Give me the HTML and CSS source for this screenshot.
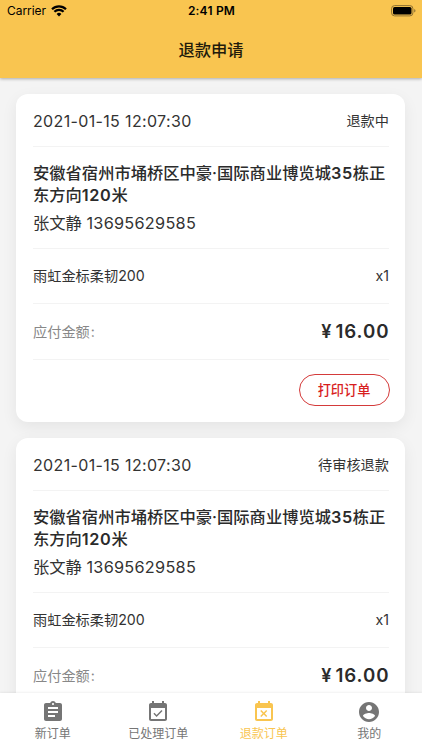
FILE: index.html
```html
<!DOCTYPE html>
<html lang="zh-CN">
<head>
<meta charset="utf-8">
<title>退款申请</title>
<link rel="stylesheet" href="styles.css">
</head>
<body>
<div class="app">
  <header class="header">
    <div class="status">
      <div class="status-left"><span class="carrier">Carrier</span>
        <svg class="wifi" viewBox="0 0 16 12"><path d="M1 4.2a10 10 0 0 1 14 0M3.4 6.8a6.5 6.5 0 0 1 9.2 0" fill="none" stroke="#000" stroke-width="2.2"/><path d="M8 11.5 5.6 9a3.4 3.4 0 0 1 4.8 0z"/></svg>
      </div>
      <span class="time">2:41 PM</span>
      <div class="status-right">
        <svg class="battery" viewBox="0 0 25 12"><rect x=".6" y=".6" width="21.3" height="10.3" rx="3" fill="none" stroke="#8f7132" stroke-width="1"/><rect x="2" y="2" width="18.5" height="7.5" rx="1.6"/><path d="M23.2 4v3.6q1.3-.6 1.3-1.8T23.2 4z" fill="#8f7132"/></svg>
      </div>
    </div>
    <h1 class="title">退款申请</h1>
  </header>
  <main class="list">
    <article class="card">
      <div class="row head"><time class="date">2021-01-15 12:07:30</time><span class="state">退款中</span></div>
      <div class="customer">
        <p class="address">安徽省宿州市埇桥区中豪·国际商业博览城<b class="num">35</b>栋正<br>东方向<b class="num">120</b>米</p>
        <p class="contact">张文静 <span class="phone">13695629585</span></p>
      </div>
      <div class="row item"><span>雨虹金标柔韧200</span><span>x1</span></div>
      <div class="row total"><span class="label">应付金额<span class="colon">:</span></span><span class="price"><span class="yen">¥</span>16.00</span></div>
      <div class="actions"><button class="print">打印订单</button></div>
    </article>
    <article class="card">
      <div class="row head"><time class="date">2021-01-15 12:07:30</time><span class="state">待审核退款</span></div>
      <div class="customer">
        <p class="address">安徽省宿州市埇桥区中豪·国际商业博览城<b class="num">35</b>栋正<br>东方向<b class="num">120</b>米</p>
        <p class="contact">张文静 <span class="phone">13695629585</span></p>
      </div>
      <div class="row item"><span>雨虹金标柔韧200</span><span>x1</span></div>
      <div class="row total"><span class="label">应付金额<span class="colon">:</span></span><span class="price"><span class="yen">¥</span>16.00</span></div>
    </article>
  </main>
  <nav class="tabs">
    <a class="tab"><svg viewBox="0 0 24 24"><path d="M19 3h-4.18C14.4 1.84 13.3 1 12 1c-1.3 0-2.4.84-2.82 2H5c-1.1 0-2 .9-2 2v14c0 1.1.9 2 2 2h14c1.1 0 2-.9 2-2V5c0-1.1-.9-2-2-2zm-7 0c.55 0 1 .45 1 1s-.45 1-1 1-1-.45-1-1 .45-1 1-1zm2 14H7v-2h7v2zm3-4H7v-2h10v2zm0-4H7V7h10v2z"/></svg><span>新订单</span></a>
    <a class="tab"><svg viewBox="0 0 24 24"><path d="M16.53 11.06 15.47 10l-4.88 4.88-2.12-2.12-1.06 1.06L10.59 17l5.94-5.94zM19 3h-1V1h-2v2H8V1H6v2H5c-1.11 0-1.99.9-1.99 2L3 19c0 1.1.89 2 2 2h14c1.1 0 2-.9 2-2V5c0-1.1-.9-2-2-2zm0 16H5V8h14v11z"/></svg><span>已处理订单</span></a>
    <a class="tab active"><svg viewBox="0 0 24 24"><path d="M9.31 17l2.44-2.44L14.19 17l1.06-1.06-2.44-2.44 2.44-2.44L14.19 10l-2.44 2.44L9.31 10l-1.06 1.06 2.44 2.44-2.44 2.44L9.31 17zM19 3h-1V1h-2v2H8V1H6v2H5c-1.11 0-1.99.9-1.99 2L3 19c0 1.1.89 2 2 2h14c1.1 0 2-.9 2-2V5c0-1.1-.9-2-2-2zm0 16H5V8h14v11z"/></svg><span>退款订单</span></a>
    <a class="tab"><svg viewBox="0 0 24 24"><path d="M12 2C6.48 2 2 6.48 2 12s4.48 10 10 10 10-4.480 10-10S17.520 2 12 2zm0 3c1.660 0 3 1.340 3 3s-1.340 3-3 3-3-1.340-3-3 1.340-3 3-3zm0 14.200c-2.500 0-4.710-1.280-6-3.220.03-1.990 4-3.080 6-3.080 1.990 0 5.970 1.090 6 3.080-1.290 1.940-3.500 3.220-6 3.220z"/></svg><span>我的</span></a>
  </nav>
</div>
</body>
</html>
```
FILE: styles.css
```css
* { box-sizing: border-box; margin: 0; padding: 0; }
body { font-family: Inter, "Noto Sans CJK SC", sans-serif; color: #333; background: #f4f4f4; }
.app { height: 750px; display: flex; flex-direction: column; overflow: hidden; }
.header { height: 78px; flex: none; background: #f9c550; box-shadow: 0 1px 3px rgba(0,0,0,.3); z-index: 1; color: #000; }
.status { height: 22px; padding: 0 6px 0 7px; display: grid; grid-template-columns: 1fr auto 1fr; align-items: center; font-size: 12px; line-height: 22px; }
.status-left { display: flex; align-items: center; gap: 5px; }
.carrier { letter-spacing: -.05px; }
.wifi { width: 16px; height: 12px; }
.time { font-weight: 600; letter-spacing: .2px; }
.status-right { display: flex; justify-content: flex-end; }
.battery { width: 25px; height: 12px; }
.title { height: 56px; line-height: 56px; text-align: center; font-size: 16.3px; font-weight: 500; color: #221b0b; }
.list { flex: 1; min-height: 0; overflow: hidden; padding: 16px 17px 0 16px; display: flex; flex-direction: column; gap: 16.5px; }
.card { flex: none; height: 327.5px; padding: 0 16px 0 17px; background: #fff; border-radius: 12px; box-shadow: 0 5px 16px rgba(0,0,0,.065); }
.row { display: flex; align-items: center; justify-content: space-between; border-bottom: 1px solid #f3f3f3; font-size: 14.2px; }
.head { height: 52.5px; }
.date { font-size: 16px; letter-spacing: .35px; padding-top: 2px; }
.customer { height: 102.5px; padding-top: 15px; border-bottom: 1px solid #f3f3f3; }
.address { font-size: 16.3px; line-height: 22.5px; font-weight: 500; white-space: nowrap; color: #2b2b2b; }
.num { font-weight: 600; letter-spacing: .6px; }
.contact { margin-top: 4px; font-size: 16.3px; line-height: 24px; white-space: nowrap; }
.phone { letter-spacing: .26px; }
.item { height: 55px; padding-bottom: 2px; }
.total { height: 56px; }
.label { color: #888; padding-bottom: 2px; }
.colon { margin-left: 1px; }
.price { display: flex; align-items: center; gap: 4px; font-size: 18.7px; font-weight: 600; letter-spacing: .95px; margin-right: -.5px; color: #2b2b2b; }
.yen { font-size: 18px; letter-spacing: 0; }
.actions { padding-top: 14px; display: flex; justify-content: flex-end; }
.print { width: 91px; height: 32px; margin-right: -.5px; border: 1.400px solid #d43a3a; border-radius: 16px; background: #fff; color: #d81e1e; font: 500 13.2px/30px Inter, "Noto Sans CJK SC", sans-serif; }
.tabs { height: 57.500px; flex: none; display: grid; grid-template-columns: repeat(4, 1fr); background: #fff; box-shadow: 0 -1px 2px rgba(0,0,0,.06); z-index: 1; }
.tab { display: flex; flex-direction: column; align-items: center; padding-top: 7.5px; color: #757575; font-size: 12px; line-height: 20px; }
.tab svg { width: 24px; height: 24px; fill: currentColor; }
.active { color: #f9c550; }
```
